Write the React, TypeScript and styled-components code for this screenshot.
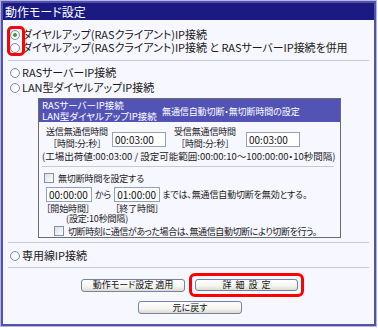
import React from "react";
import styled, { createGlobalStyle } from "styled-components";

const Global = createGlobalStyle`
  html, body { margin: 0; padding: 0; background: #ffffff; }
  body {
    font-family: "Noto Sans CJK JP", "Noto Sans", sans-serif;
    font-feature-settings: "palt" 1;
    font-size: 10px;
    line-height: 12px;
    color: #1a1a1a;
  }
`;

const Panel = styled.div`
  margin: 1px;
  width: 371px;
  border: 2px solid #5252a8;
  box-shadow: 0 0 0 1px #b4b4e0;
  background: #f7f7ff;
  padding-bottom: 10px;
`;

const Header = styled.div`
  height: 17px;
  line-height: 17px;
  background: #1a1a82;
  color: #ffffff;
  font-size: 12px;
  padding-left: 2px;
  white-space: nowrap;
`;

const Body = styled.div`
  padding: 8px 5px 0 5px;
`;

const Group = styled.div`
  position: relative;
`;

const Highlight = styled.div<{ $w: number; $h: number; $l: number; $t: number }>`
  position: absolute;
  left: ${(p) => p.$l}px;
  top: ${(p) => p.$t}px;
  width: ${(p) => p.$w}px;
  height: ${(p) => p.$h}px;
  border: 3px solid #ff0000;
  border-radius: 5px;
  box-sizing: border-box;
  pointer-events: none;
`;

const OptionRow = styled.div<{ $h?: number }>`
  display: flex;
  align-items: center;
  height: ${(p) => p.$h ?? 13}px;
  line-height: 13px;
  font-size: 11px;
  letter-spacing: -0.05px;
  white-space: nowrap;
`;

const Radio = styled.span<{ $checked?: boolean }>`
  position: relative;
  display: inline-block;
  box-sizing: border-box;
  width: 10px;
  height: 10px;
  margin: 0 2px 0 2px;
  border-radius: 50%;
  border: 1px solid #7d8fb0;
  background: radial-gradient(circle at 60% 60%, #ffffff 30%, #e2e6ee 100%);
  flex: none;
  &::after {
    content: "";
    display: ${(p) => (p.$checked ? "block" : "none")};
    position: absolute;
    left: 2px;
    top: 2px;
    width: 4px;
    height: 4px;
    border-radius: 50%;
    background: #2ea52e;
  }
`;

const Rule = styled.div<{ $mt: number; $mb: number }>`
  height: 1px;
  background: #c9c9cf;
  margin: ${(p) => p.$mt}px 0 ${(p) => p.$mb}px 0;
`;

const Box = styled.div`
  margin: 3px 0 0 30px;
  width: 303px;
  box-sizing: border-box;
  border: 1px solid #6a6a72;
  background: #f7f7ff;
  height: 140px;
`;

const BoxHeader = styled.div`
  display: flex;
  align-items: center;
  height: 23px;
  background: #5353b6;
  color: #ffffff;
  padding-left: 3px;
  white-space: nowrap;
`;

const HeaderLines = styled.div`
  display: flex;
  flex-direction: column;
  font-size: 9.5px;
  line-height: 11px;
  width: 120px;
  padding-top: 1px;
`;

const HeaderTitle = styled.span`
  font-size: 9px;
  line-height: 11px;
  letter-spacing: -0.1px;
  padding-top: 2px;
`;

const BoxBody = styled.div`
  padding: 3px 3px 0 3px;
  font-size: 9px;
  line-height: 11px;
  letter-spacing: -0.15px;
`;

const TimeRow = styled.div`
  display: flex;
  align-items: center;
  height: 25px;
`;

const StackLabel = styled.div<{ $w: number; $ml: number }>`
  display: flex;
  flex-direction: column;
  align-items: center;
  width: ${(p) => p.$w}px;
  margin-left: ${(p) => p.$ml}px;
  line-height: 12px;
  white-space: nowrap;
`;

const TimeInput = styled.div<{ $w: number; $ml?: number; $h?: number }>`
  box-sizing: border-box;
  width: ${(p) => p.$w}px;
  height: ${(p) => p.$h ?? 15}px;
  margin-left: ${(p) => p.$ml ?? 0}px;
  margin-top: 3px;
  border: 1px solid #8fa3c0;
  background: #ffffff;
  font-size: 10px;
  line-height: ${(p) => (p.$h ?? 15) - 2}px;
  padding-left: 2px;
  letter-spacing: 0;
  color: #111;
`;

const Note = styled.div`
  font-size: 9.5px;
  line-height: 12px;
  height: 12px;
  letter-spacing: 0;
  white-space: nowrap;
`;

const InnerRule = styled.div`
  height: 1px;
  background: #c9c9cf;
  margin: 4px 3px 4px 0;
`;

const CheckRow = styled.div<{ $ml: number; $ls?: number }>`
  display: flex;
  align-items: center;
  height: 14px;
  margin-left: ${(p) => p.$ml}px;
  letter-spacing: ${(p) => p.$ls ?? -0.15}px;
  white-space: nowrap;
`;

const Check = styled.span`
  display: inline-block;
  box-sizing: border-box;
  width: 10px;
  height: 10px;
  border: 1px solid #8090ac;
  background: linear-gradient(135deg, #dcdfe6 0%, #ffffff 100%);
  margin-right: 4px;
  flex: none;
`;

const RangeRow = styled.div`
  display: flex;
  align-items: center;
  height: 17px;
  margin-top: 1px;
  margin-left: 4px;
  white-space: nowrap;
`;

const RangeInput = styled(TimeInput)`
  margin-top: 0;
`;

const Word = styled.span<{ $ml: number; $mr: number }>`
  margin: 0 ${(p) => p.$mr}px 0 ${(p) => p.$ml}px;
`;

const CaptionRow = styled.div`
  display: flex;
  line-height: 10px;
  height: 10px;
  margin-left: 4px;
  margin-top: 1px;
  white-space: nowrap;
`;

const Caption = styled.span<{ $w: number }>`
  width: ${(p) => p.$w}px;
`;

const SubCaption = styled.div`
  line-height: 10px;
  height: 10px;
  margin-left: 24px;
  white-space: nowrap;
`;

const ButtonRow = styled.div<{ $pl: number; $mt: number }>`
  display: flex;
  align-items: center;
  padding-left: ${(p) => p.$pl}px;
  margin-top: ${(p) => p.$mt}px;
  gap: 4px;
`;

const Button = styled.button<{ $w: number; $h: number; $ls?: number }>`
  display: block;
  box-sizing: border-box;
  width: ${(p) => p.$w}px;
  height: ${(p) => p.$h}px;
  padding: 0 0 0 ${(p) => p.$ls ?? 0}px;
  border: 1px solid #6f84a8;
  border-radius: 3px;
  background: linear-gradient(#ffffff 0%, #f4f4f0 60%, #dedbd0 100%);
  font-family: "Noto Sans CJK JP", "Noto Sans", sans-serif;
  font-feature-settings: "palt" 1;
  font-size: 9px;
  line-height: 10px;
  letter-spacing: ${(p) => p.$ls ?? 0}px;
  color: #111;
  white-space: nowrap;
`;

const Ring = styled.div`
  display: flex;
  box-sizing: border-box;
  border: 3px solid #ff0000;
  border-radius: 6px;
  padding: 3px 3px 3px 3px;
`;

export default function App() {
  return (
    <>
      <Global />
      <Panel>
        <Header>動作モード設定</Header>
        <Body>
          <Group>
            <OptionRow>
              <Radio $checked />
              ダイヤルアップ(RASクライアント)IP接続
            </OptionRow>
            <OptionRow>
              <Radio />
              ダイヤルアップ(RASクライアント)IP接続 と RASサーバーIP接続を併用
            </OptionRow>
            <Highlight $l={-1} $t={-2} $w={18} $h={30} />
          </Group>
          <Rule $mt={6} $mb={4} />
          <OptionRow $h={15}>
            <Radio />
            RASサーバーIP接続
          </OptionRow>
          <OptionRow $h={15}>
            <Radio />
            LAN型ダイヤルアップIP接続
          </OptionRow>
          <Box>
            <BoxHeader>
              <HeaderLines>
                <span>RASサーバーIP接続</span>
                <span>LAN型ダイヤルアップIP接続</span>
              </HeaderLines>
              <HeaderTitle>無通信自動切断・無切断時間の設定</HeaderTitle>
            </BoxHeader>
            <BoxBody>
              <TimeRow>
                <StackLabel $w={66} $ml={2}>
                  <span>送信無通信時間</span>
                  <span>［時間:分:秒］</span>
                </StackLabel>
                <TimeInput $w={54} $ml={2}>00:03:00</TimeInput>
                <StackLabel $w={66} $ml={6}>
                  <span>受信無通信時間</span>
                  <span>［時間:分:秒］</span>
                </StackLabel>
                <TimeInput $w={54} $ml={8}>00:03:00</TimeInput>
              </TimeRow>
              <Note>(工場出荷値:00:03:00 / 設定可能範囲:00:00:10〜100:00:00・10秒間隔)</Note>
              <InnerRule />
              <CheckRow $ml={2}>
                <Check />
                無切断時間を設定する
              </CheckRow>
              <RangeRow>
                <RangeInput $w={46} $h={15}>00:00:00</RangeInput>
                <Word $ml={3} $mr={3}>から</Word>
                <RangeInput $w={46} $h={15}>01:00:00</RangeInput>
                <Word $ml={2} $mr={0}>までは、無通信自動切断を無効とする。</Word>
              </RangeRow>
              <CaptionRow>
                <Caption $w={69}>［開始時間］</Caption>
                <Caption $w={60}>［終了時間］</Caption>
              </CaptionRow>
              <SubCaption>(設定:10秒間隔)</SubCaption>
              <CheckRow $ml={12} $ls={-0.4}>
                <Check />
                切断時刻に通信があった場合は、無通信自動切断により切断を行う。
              </CheckRow>
            </BoxBody>
          </Box>
          <Rule $mt={4} $mb={5} />
          <OptionRow $h={15}>
            <Radio />
            専用線IP接続
          </OptionRow>
          <Rule $mt={4} $mb={0} />
          <ButtonRow $pl={73} $mt={5}>
            <Button $w={104} $h={13}>動作モード設定 適用</Button>
            <Ring>
              <Button $w={103} $h={12} $ls={4}>詳細設定</Button>
            </Ring>
          </ButtonRow>
          <ButtonRow $pl={130} $mt={4}>
            <Button $w={104} $h={13}>元に戻す</Button>
          </ButtonRow>
        </Body>
      </Panel>
    </>
  );
}
